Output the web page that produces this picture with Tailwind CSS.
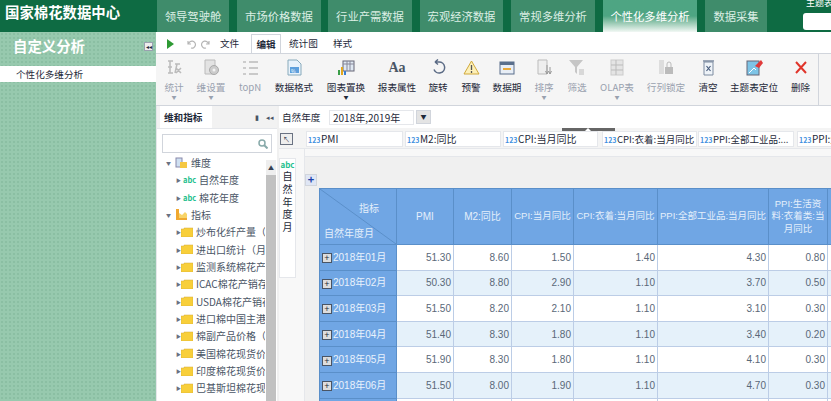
<!doctype html>
<html lang="zh-CN">
<head>
<meta charset="UTF-8" />
<title>国家棉花数据中心</title>
<script src="https://cdn.jsdelivr.net/npm/@tailwindcss/browser@4"></script>
</head>
<body class="bg-white overflow-hidden">
<div class="w-[831px] h-[401px] overflow-hidden flex flex-col font-['Noto_Sans_CJK_SC','Liberation_Sans',sans-serif] text-[10px] text-gray-700">

  <!-- header -->
  <header class="h-[32px] shrink-0 flex bg-[#0e6b43] text-[11.3px] text-[#dcefe5] relative">
    <div class="w-[157px] pl-[5px] pt-[3px] text-[14.4px] leading-[18px] font-bold text-white">国家棉花数据中心</div>
    <div class="w-[72px] mr-[8px] bg-[#3f8c6b] flex items-center justify-center">领导驾驶舱</div>
    <div class="w-[84px] mr-[7px] bg-[#3f8c6b] flex items-center justify-center">市场价格数据</div>
    <div class="w-[84px] mr-[8px] bg-[#3f8c6b] flex items-center justify-center">行业产需数据</div>
    <div class="w-[83px] mr-[8px] bg-[#3f8c6b] flex items-center justify-center">宏观经济数据</div>
    <div class="w-[84px] mr-[8px] bg-[#3f8c6b] flex items-center justify-center">常规多维分析</div>
    <div class="w-[94px] mr-[8px] bg-gradient-to-b from-[#4ea583] from-50% to-[#f2f8f5] flex items-center justify-center text-white">个性化多维分析</div>
    <div class="w-[62px] bg-[#3f8c6b] flex items-center justify-center">数据采集</div>
    <div class="absolute left-[806px] top-[-3px] text-[9px] leading-[12px] text-white whitespace-nowrap">主题表</div>
    <div class="absolute left-[803px] top-[13px] w-[30px] h-[17px] bg-white rounded-[3px]"></div>
  </header>

  <div class="flex-1 flex min-h-0">
    <!-- sidebar -->
    <aside class="w-[156px] shrink-0 bg-[#97c9ae] bg-[radial-gradient(#8bbfa3_1px,transparent_1px)] bg-[size:4px_4px]">
      <div class="h-[34px] pl-[13px] pr-[3px] pb-[6px] flex items-center justify-between">
        <span class="text-[14.4px] font-bold text-white">自定义分析</span>
        <span class="w-[9px] h-[9px] bg-[#eee] border border-gray-400 text-[6px] leading-[7px] text-center text-gray-800">◂◂</span>
      </div>
      <div class="h-[16px] bg-white pl-[16px] text-[9.6px] leading-[16px] text-gray-800">个性化多维分析</div>
    </aside>

    <main class="flex-1 min-w-0 flex flex-col">
      <!-- menu row -->
      <div class="h-[21px] shrink-0 flex items-end pl-[10px] text-[9.6px] text-gray-800">
        <svg class="w-[8px] h-[10px] mb-[4px]" viewBox="0 0 8 10"><path d="M1 0l7 5-7 5z" fill="#2e9a34"/></svg>
        <svg class="w-[10px] h-[10px] ml-[12px] mb-[4px]" viewBox="0 0 10 10"><path d="M2 2v3h3M2.5 5A3.5 3.5 0 1 1 5 9" fill="none" stroke="#b5b5b5" stroke-width="1.2"/></svg>
        <svg class="w-[10px] h-[10px] ml-[5px] mb-[4px]" viewBox="0 0 10 10"><path d="M8 2v3H5M7.500 5A3.500 3.500 0 1 0 5 9" fill="none" stroke="#b5b5b5" stroke-width="1.2"/></svg>
        <span class="ml-[9px] w-[28px] mb-[3px]">文件</span>
        <span class="ml-[3px] w-[30px] h-[19px] border border-b-0 border-gray-300 text-center leading-[18px] font-bold bg-white">编辑</span>
        <span class="ml-[8px] w-[34px] mb-[3px]">统计图</span>
        <span class="ml-[10px] mb-[3px]">样式</span>
      </div>

      <!-- ribbon -->
      <div class="h-[53px] shrink-0 flex bg-[#f5f5f5] border-y border-gray-300 text-[9.6px] text-gray-800 pl-[1px]">
        <div class="w-[34px] flex flex-col items-center pt-[5px] text-gray-400">
          <svg class="w-[16px] h-[17px]" viewBox="0 0 16 17"><path d="M2 2h5M2 8h4M2 14h5M4 2v12M9 5h5M11 5l-2 9M10 9l5 5M15 9l-5 5" fill="none" stroke="#bbb" stroke-width="1.500"/></svg>
          <span class="mt-[5px] leading-[12px]">统计</span><span class="text-[5px] leading-[8px]">▼</span>
        </div>
        <div class="w-[40px] flex flex-col items-center pt-[5px] text-gray-400">
          <svg class="w-[17px] h-[17px]" viewBox="0 0 17 17"><path d="M2 1h10v14H2z" fill="#e3e3e3" stroke="#bbb"/><circle cx="11" cy="11" r="4.500" fill="#ccc" stroke="#aaa"/><circle cx="11" cy="11" r="1.500" fill="#f3f3f3"/></svg>
          <span class="mt-[5px] leading-[12px]">维设置</span><span class="text-[5px] leading-[8px]">▼</span>
        </div>
        <div class="w-[38px] flex flex-col items-center pt-[5px] text-gray-400">
          <svg class="w-[17px] h-[17px]" viewBox="0 0 17 17"><path d="M7 3h9M7 9h9M7 15h9" stroke="#bbb" stroke-width="1.500"/><path d="M1 2h3v2H1zM1 8h3v2H1zM1 14h3v2H1z" fill="#ccc"/></svg>
          <span class="mt-[5px] leading-[12px]">topN</span>
        </div>
        <div class="w-[50px] flex flex-col items-center pt-[5px]">
          <svg class="w-[15px] h-[17px]" viewBox="0 0 15 17"><path d="M1 1h9l4 4v11H1z" fill="#e8f2fb" stroke="#8ab"/><rect x="3" y="8" width="9" height="6" fill="#5d9fdc"/><text x="4" y="13.500" font-size="5" fill="#fff">%</text></svg>
          <span class="mt-[5px] leading-[12px]">数据格式</span>
        </div>
        <div class="w-[54px] flex flex-col items-center pt-[5px]">
          <svg class="w-[18px] h-[17px]" viewBox="0 0 18 17"><rect x="6" y="2" width="11" height="10" fill="#dfe8f2" stroke="#667"/><path d="M6 5h11M10 2v10M13 2v10" stroke="#889"/><rect x="1" y="11" width="2" height="5" fill="#3a9e48"/><rect x="4" y="8" width="2" height="8" fill="#e3a81d"/><rect x="7" y="12" width="2" height="4" fill="#3b7fd1"/></svg>
          <span class="mt-[5px] leading-[12px]">图表置换</span><span class="text-[5px] leading-[8px]">▼</span>
        </div>
        <div class="w-[48px] flex flex-col items-center pt-[5px]">
          <span class="h-[17px] text-[14px] leading-[17px] font-bold text-gray-600 font-['Liberation_Serif',serif]">Aa</span>
          <span class="mt-[5px] leading-[12px]">报表属性</span>
        </div>
        <div class="w-[34px] flex flex-col items-center pt-[5px]">
          <svg class="w-[15px] h-[17px]" viewBox="0 0 15 17"><path d="M4 3h4a5.500 5.500 0 1 1-5 7.500M4 3l3-2.500M4 3l3 2.500" fill="none" stroke="#5b6b85" stroke-width="1.500"/></svg>
          <span class="mt-[5px] leading-[12px]">旋转</span>
        </div>
        <div class="w-[32px] flex flex-col items-center pt-[5px]">
          <svg class="w-[17px] h-[17px]" viewBox="0 0 17 17"><path d="M8.500 2l7.500 13H1z" fill="#fdf0b8" stroke="#d0a93c"/><path d="M8.500 6v5M8.500 12v2" stroke="#555" stroke-width="1.300"/></svg>
          <span class="mt-[5px] leading-[12px]">预警</span>
        </div>
        <div class="w-[40px] flex flex-col items-center pt-[5px]">
          <svg class="w-[16px] h-[17px]" viewBox="0 0 16 17"><rect x="1" y="3" width="14" height="12" fill="#e8eef6" stroke="#5a6f8c"/><rect x="1" y="3" width="14" height="3" fill="#5a6f8c"/><rect x="4" y="9" width="8" height="2" fill="#e9a93a"/></svg>
          <span class="mt-[5px] leading-[12px]">数据期</span>
        </div>
        <div class="w-[34px] flex flex-col items-center pt-[5px] text-gray-400">
          <svg class="w-[15px] h-[17px]" viewBox="0 0 15 17"><path d="M1 1h9v14H1z" fill="#eee" stroke="#bbb"/><path d="M10 6v9M13 8v7M8.500 12l1.500 3 1.500-3M11.500 12l1.500 3 1.500-3" fill="none" stroke="#999"/></svg>
          <span class="mt-[5px] leading-[12px]">排序</span><span class="text-[5px] leading-[8px]">▼</span>
        </div>
        <div class="w-[32px] flex flex-col items-center pt-[5px] text-gray-400">
          <svg class="w-[16px] h-[17px]" viewBox="0 0 16 17"><path d="M0 1h14L8 8v7L6 13V8z" fill="#c6c6c6"/><path d="M10 11h5M10 13h5M10 15h5" stroke="#bbb"/></svg>
          <span class="mt-[5px] leading-[12px]">筛选</span>
        </div>
        <div class="w-[48px] flex flex-col items-center pt-[5px] text-gray-400">
          <svg class="w-[14px] h-[17px]" viewBox="0 0 14 17"><rect x="1" y="1" width="12" height="15" fill="#e4e4e4" stroke="#ccc"/><path d="M1 6h12M1 11h12M6 1v15" stroke="#bbb"/></svg>
          <span class="mt-[5px] leading-[12px]">OLAP表</span><span class="text-[5px] leading-[8px]">▼</span>
        </div>
        <div class="w-[50px] flex flex-col items-center pt-[5px] text-gray-400">
          <svg class="w-[16px] h-[17px]" viewBox="0 0 16 17"><path d="M1 1h5v14H1z" fill="#ddd"/><rect x="7" y="8" width="8" height="7" fill="#bbb"/><path d="M9 8V5a2 2 0 0 1 4 0v3" fill="none" stroke="#bbb"/></svg>
          <span class="mt-[5px] leading-[12px]">行列锁定</span>
        </div>
        <div class="w-[34px] flex flex-col items-center pt-[5px]">
          <svg class="w-[13px] h-[17px]" viewBox="0 0 13 17"><path d="M2 3h9v13H2z" fill="#eef3f8" stroke="#7d8ba0"/><path d="M1 2h11" stroke="#7d8ba0" stroke-width="1.500"/><path d="M4.500 7l4 5M8.500 7l-4 5" stroke="#44597a" stroke-width="1.200"/></svg>
          <span class="mt-[5px] leading-[12px]">清空</span>
        </div>
        <div class="w-[58px] flex flex-col items-center pt-[5px]">
          <svg class="w-[17px] h-[17px]" viewBox="0 0 17 17"><rect x="1" y="2" width="12" height="14" fill="#7ec4e6" stroke="#667"/><path d="M3 14l5-5 2 2" fill="none" stroke="#fff"/><path d="M9 7l6-6 2 3-4 5z" fill="#e03a3a"/></svg>
          <span class="mt-[5px] leading-[12px]">主题表定位</span>
        </div>
        <div class="w-[36px] flex flex-col items-center pt-[5px] border-r border-gray-300">
          <svg class="w-[14px] h-[17px]" viewBox="0 0 14 17"><path d="M2 3l10 11M12 3L2 14" stroke="#e0352b" stroke-width="2"/></svg>
          <span class="mt-[5px] leading-[12px]">删除</span>
        </div>
      </div>

      <div class="flex-1 min-h-0 flex">
        <!-- tree panel -->
        <section class="w-[121px] shrink-0 flex flex-col border-l border-gray-200 bg-[#f2f2f2]">
          <div class="h-[22px] shrink-0 flex items-center text-[9.6px]">
            <span class="w-[52px] ml-[3px] h-full bg-white flex items-center pl-[4px] font-bold text-gray-800">维和指标</span>
            <span class="ml-auto mr-[7px] text-[7px] text-gray-600">▮</span>
            <span class="mr-[3px] text-[7px] text-gray-600">◂◂</span>
          </div>
          <div class="flex-1 min-h-0 bg-white relative pt-[5px] border-t border-gray-200">
            <div class="mx-[5px] h-[19px] border border-gray-300 flex items-center justify-end pr-[3px]">
              <svg class="w-[10px] h-[10px]" viewBox="0 0 10 10"><circle cx="4" cy="4" r="3" fill="none" stroke="#8aa" stroke-width="1.500"/><path d="M6 6l3.500 3.500" stroke="#8aa" stroke-width="2"/></svg>
            </div>
            <div class="absolute right-[1px] top-[31px] bottom-0 w-[10px] bg-[#eee]">
              <div class="h-[15px] text-[6px] text-center leading-[15px] text-gray-700">▲</div>
              <div class="h-full bg-[#c1c1c1]"></div>
            </div>
            <div class="w-[108px] overflow-hidden whitespace-nowrap text-[10px] leading-[17.35px] text-gray-600 mt-[1px]">
              <div class="flex items-center pl-[9px]"><span class="w-[8px] text-[5px] text-gray-500">▼</span><svg class="w-[12px] h-[11px] ml-[1px] mr-[4px]" viewBox="0 0 12 11"><rect x="1" y="1" width="6" height="9" fill="#cfe0f2" stroke="#88a"/><rect x="5" y="5" width="7" height="6" fill="#f5c842"/></svg>维度</div>
              <div class="flex items-center pl-[19px]"><span class="w-[7px] text-[5px] text-gray-500">▶</span><span class="w-[13px] mr-[3px] text-[7.5px] font-bold text-[#1fbf8f]">abc</span>自然年度</div>
              <div class="flex items-center pl-[19px]"><span class="w-[7px] text-[5px] text-gray-500">▶</span><span class="w-[13px] mr-[3px] text-[7.5px] font-bold text-[#1fbf8f]">abc</span>棉花年度</div>
              <div class="flex items-center pl-[9px]"><span class="w-[8px] text-[5px] text-gray-500">▼</span><svg class="w-[12px] h-[11px] ml-[1px] mr-[4px]" viewBox="0 0 12 11"><path d="M1 0h3v9h8v2H1z" fill="#f0a830"/><path d="M4 4l3 2 3-3 2 2v4H4z" fill="#f8d468"/></svg>指标</div>
              <div class="flex items-center pl-[19px]"><span class="w-[8px] text-[5px] text-gray-500">▶</span><svg class="w-[12px] h-[10px] mr-[3px] shrink-0" viewBox="0 0 12 10"><path d="M0 2h3V1h9v9H0z" fill="#f8cf3a" stroke="#d4a93a" stroke-width=".5"/></svg>炒布化纤产量（月）</div>
              <div class="flex items-center pl-[19px]"><span class="w-[8px] text-[5px] text-gray-500">▶</span><svg class="w-[12px] h-[10px] mr-[3px] shrink-0" viewBox="0 0 12 10"><path d="M0 2h3V1h9v9H0z" fill="#f8cf3a" stroke="#d4a93a" stroke-width=".5"/></svg>进出口统计（月）</div>
              <div class="flex items-center pl-[19px]"><span class="w-[8px] text-[5px] text-gray-500">▶</span><svg class="w-[12px] h-[10px] mr-[3px] shrink-0" viewBox="0 0 12 10"><path d="M0 2h3V1h9v9H0z" fill="#f8cf3a" stroke="#d4a93a" stroke-width=".5"/></svg>监测系统棉花产销</div>
              <div class="flex items-center pl-[19px]"><span class="w-[8px] text-[5px] text-gray-500">▶</span><svg class="w-[12px] h-[10px] mr-[3px] shrink-0" viewBox="0 0 12 10"><path d="M0 2h3V1h9v9H0z" fill="#f8cf3a" stroke="#d4a93a" stroke-width=".5"/></svg>ICAC棉花产销存</div>
              <div class="flex items-center pl-[19px]"><span class="w-[8px] text-[5px] text-gray-500">▶</span><svg class="w-[12px] h-[10px] mr-[3px] shrink-0" viewBox="0 0 12 10"><path d="M0 2h3V1h9v9H0z" fill="#f8cf3a" stroke="#d4a93a" stroke-width=".5"/></svg>USDA棉花产销存</div>
              <div class="flex items-center pl-[19px]"><span class="w-[8px] text-[5px] text-gray-500">▶</span><svg class="w-[12px] h-[10px] mr-[3px] shrink-0" viewBox="0 0 12 10"><path d="M0 2h3V1h9v9H0z" fill="#f8cf3a" stroke="#d4a93a" stroke-width=".5"/></svg>进口棉中国主港</div>
              <div class="flex items-center pl-[19px]"><span class="w-[8px] text-[5px] text-gray-500">▶</span><svg class="w-[12px] h-[10px] mr-[3px] shrink-0" viewBox="0 0 12 10"><path d="M0 2h3V1h9v9H0z" fill="#f8cf3a" stroke="#d4a93a" stroke-width=".5"/></svg>棉副产品价格（月）</div>
              <div class="flex items-center pl-[19px]"><span class="w-[8px] text-[5px] text-gray-500">▶</span><svg class="w-[12px] h-[10px] mr-[3px] shrink-0" viewBox="0 0 12 10"><path d="M0 2h3V1h9v9H0z" fill="#f8cf3a" stroke="#d4a93a" stroke-width=".5"/></svg>美国棉花现货价</div>
              <div class="flex items-center pl-[19px]"><span class="w-[8px] text-[5px] text-gray-500">▶</span><svg class="w-[12px] h-[10px] mr-[3px] shrink-0" viewBox="0 0 12 10"><path d="M0 2h3V1h9v9H0z" fill="#f8cf3a" stroke="#d4a93a" stroke-width=".5"/></svg>印度棉花现货价</div>
              <div class="flex items-center pl-[19px]"><span class="w-[8px] text-[5px] text-gray-500">▶</span><svg class="w-[12px] h-[10px] mr-[3px] shrink-0" viewBox="0 0 12 10"><path d="M0 2h3V1h9v9H0z" fill="#f8cf3a" stroke="#d4a93a" stroke-width=".5"/></svg>巴基斯坦棉花现货</div>
            </div>
          </div>
        </section>

        <!-- pivot area -->
        <section class="flex-1 min-w-0 flex flex-col bg-[#f4f4f4] border-l-[2px] border-[#f0f0f0] relative">
          <div class="h-[22px] shrink-0 bg-white flex items-center pl-[3px] text-[9.6px] text-gray-800">
            <span class="w-[47px]">自然年度</span>
            <span class="w-[85px] h-[15px] border border-gray-200 pl-[3px] leading-[13px] text-[10px]">2018年,2019年</span>
            <span class="ml-[2px] w-[15px] h-[14px] bg-[#e4e4e4] border border-gray-300 text-center text-[6px] leading-[12px]">▼</span>
          </div>
          <div class="absolute left-[283px] top-[22px] w-[53px] h-[3px] bg-[#666]"></div>
          <svg class="absolute left-[306px] top-[22px] w-[6px] h-[3px]" viewBox="0 0 6 3"><path d="M0 3l3-3 3 3z" fill="#fff"/></svg>

          <div class="h-[19px] shrink-0 flex items-center mt-[2px] pl-[1px] overflow-hidden border-b border-gray-200 text-[10px] text-gray-800 whitespace-nowrap">
            <span class="w-[13px] h-[12px] mr-[13px] bg-[#eee] border border-gray-500 shrink-0 text-[7px] leading-[10px] text-center">↖</span>
            <span class="w-[97px] h-[16px] mr-[2px] shrink-0 bg-white border border-gray-200 pl-[1px] leading-[14px]"><b class="inline-block w-[12px] mr-[1px] text-[7px] text-[#3f8fe0]">123</b>PMI</span>
            <span class="w-[96px] h-[16px] mr-[2px] shrink-0 bg-white border border-gray-200 pl-[1px] leading-[14px]"><b class="inline-block w-[12px] mr-[1px] text-[7px] text-[#3f8fe0]">123</b>M2:同比</span>
            <span class="w-[95px] h-[16px] mr-[4px] shrink-0 bg-white border border-gray-200 pl-[1px] leading-[14px]"><b class="inline-block w-[12px] mr-[1px] text-[7px] text-[#3f8fe0]">123</b>CPI:当月同比</span>
            <span class="w-[95px] h-[16px] mr-[1px] shrink-0 bg-white border border-gray-200 pl-[1px] leading-[14px] overflow-hidden"><b class="inline-block w-[12px] mr-[1px] text-[7px] text-[#3f8fe0]">123</b><span class="text-[9.5px]">CPI:衣着:当月同比</span></span>
            <span class="w-[96px] h-[16px] mr-[3px] shrink-0 bg-white border border-gray-200 pl-[1px] leading-[14px] overflow-hidden"><b class="inline-block w-[12px] mr-[1px] text-[7px] text-[#3f8fe0]">123</b><span class="text-[9.5px]">PPI:全部工业品:...</span></span>
            <span class="w-[96px] h-[16px] shrink-0 bg-white border border-gray-200 pl-[1px] leading-[14px]"><b class="inline-block w-[12px] mr-[1px] text-[7px] text-[#3f8fe0]">123</b>PPI:生活资料</span>
          </div>

          <div class="flex-1 min-h-0 flex">
            <div class="w-[26px] shrink-0 bg-[#f8f8f8] border-r border-gray-200 pt-[9px]">
              <div class="w-[17px] h-[120px] bg-white border border-gray-200 flex flex-col items-center text-[10px] leading-[12.75px] text-gray-800">
                <b class="text-[8px] leading-[11px] text-[#1fbf8f]">abc</b>
                <span>自</span><span>然</span><span>年</span><span>度</span><span>月</span>
              </div>
            </div>
            <div class="flex-1 min-w-0 bg-[#f0f0f0] overflow-hidden">
              <div class="h-[8px] bg-[#f8f8f8] border-b border-gray-200"></div>
              <span class="block mt-[17px] w-[12px] h-[12px] bg-[#dfe6f5] border border-gray-300 text-[#1c3fa8] text-[11px] leading-[9px] text-center font-bold">+</span>
              <table class="ml-[14px] mt-[2px] table-fixed border-collapse w-[520px] text-right text-[10px] text-[#5a6878] font-['Liberation_Sans','Noto_Sans_CJK_SC',sans-serif]">
                <colgroup>
                  <col class="w-[77px]" /><col class="w-[57px]" /><col class="w-[58px]" /><col class="w-[62px]" /><col class="w-[84px]" /><col class="w-[111px]" /><col class="w-[59px]" /><col class="w-[12px]" />
                </colgroup>
                <thead class="bg-[#70a6e4] text-[#e4effb] text-center text-[10px]">
                  <tr class="h-[56px]">
                    <th class="font-normal border border-[#5a8fc9] p-0 pt-[9px] relative text-left leading-[13px]">
                      <svg class="absolute inset-0 w-full h-full" viewBox="0 0 77 56" preserveAspectRatio="none"><path d="M0 0L77 56" stroke="#5a8fc9"/></svg>
                      <div class="pl-[39px] mb-[12px]">指标</div>
                      <div class="pl-[4px]">自然年度月</div>
                    </th>
                    <th class="font-normal border border-[#5a8fc9]">PMI</th>
                    <th class="font-normal border border-[#5a8fc9]">M2:同比</th>
                    <th class="font-normal border border-[#5a8fc9] whitespace-nowrap text-[9.5px]">CPI:当月同比</th>
                    <th class="font-normal border border-[#5a8fc9] whitespace-nowrap text-[9.5px]">CPI:衣着:当月同比</th>
                    <th class="font-normal border border-[#5a8fc9] whitespace-nowrap text-[9.5px]">PPI:全部工业品:当月同比</th>
                    <th class="font-normal border border-[#5a8fc9] leading-[12.500px] text-[9.5px]">PPI:生活资料:衣着类:当月同比</th>
                    <th class="font-normal border border-[#5a8fc9]"></th>
                  </tr>
                </thead>
                <tbody>
                  <tr class="h-[25.6px] bg-white">
                    <th class="font-normal text-left bg-[#70a6e4] text-[#eaf2fc] border border-[#5a8fc9] pl-[2px] whitespace-nowrap"><span class="inline-block w-[10px] h-[10px] bg-[#ddd] border border-gray-600 text-gray-800 text-[9px] leading-[8px] text-center mr-[1px] align-middle">+</span>2018年01月</th>
                    <td class="border border-[#bccde6] pr-[2px]">51.30</td><td class="border border-[#bccde6] pr-[2px]">8.60</td><td class="border border-[#bccde6] pr-[2px]">1.50</td><td class="border border-[#bccde6] pr-[2px]">1.40</td><td class="border border-[#bccde6] pr-[2px]">4.30</td><td class="border border-[#bccde6] pr-[2px]">0.80</td><td class="border border-[#bccde6]"></td>
                  </tr>
                  <tr class="h-[25.6px] bg-[#e5f1fa]">
                    <th class="font-normal text-left bg-[#70a6e4] text-[#eaf2fc] border border-[#5a8fc9] pl-[2px] whitespace-nowrap"><span class="inline-block w-[10px] h-[10px] bg-[#ddd] border border-gray-600 text-gray-800 text-[9px] leading-[8px] text-center mr-[1px] align-middle">+</span>2018年02月</th>
                    <td class="border border-[#bccde6] pr-[2px]">50.30</td><td class="border border-[#bccde6] pr-[2px]">8.80</td><td class="border border-[#bccde6] pr-[2px]">2.90</td><td class="border border-[#bccde6] pr-[2px]">1.10</td><td class="border border-[#bccde6] pr-[2px]">3.70</td><td class="border border-[#bccde6] pr-[2px]">0.50</td><td class="border border-[#bccde6]"></td>
                  </tr>
                  <tr class="h-[25.6px] bg-white">
                    <th class="font-normal text-left bg-[#70a6e4] text-[#eaf2fc] border border-[#5a8fc9] pl-[2px] whitespace-nowrap"><span class="inline-block w-[10px] h-[10px] bg-[#ddd] border border-gray-600 text-gray-800 text-[9px] leading-[8px] text-center mr-[1px] align-middle">+</span>2018年03月</th>
                    <td class="border border-[#bccde6] pr-[2px]">51.50</td><td class="border border-[#bccde6] pr-[2px]">8.20</td><td class="border border-[#bccde6] pr-[2px]">2.10</td><td class="border border-[#bccde6] pr-[2px]">1.10</td><td class="border border-[#bccde6] pr-[2px]">3.10</td><td class="border border-[#bccde6] pr-[2px]">0.30</td><td class="border border-[#bccde6]"></td>
                  </tr>
                  <tr class="h-[25.6px] bg-[#e5f1fa]">
                    <th class="font-normal text-left bg-[#70a6e4] text-[#eaf2fc] border border-[#5a8fc9] pl-[2px] whitespace-nowrap"><span class="inline-block w-[10px] h-[10px] bg-[#ddd] border border-gray-600 text-gray-800 text-[9px] leading-[8px] text-center mr-[1px] align-middle">+</span>2018年04月</th>
                    <td class="border border-[#bccde6] pr-[2px]">51.40</td><td class="border border-[#bccde6] pr-[2px]">8.30</td><td class="border border-[#bccde6] pr-[2px]">1.80</td><td class="border border-[#bccde6] pr-[2px]">1.10</td><td class="border border-[#bccde6] pr-[2px]">3.40</td><td class="border border-[#bccde6] pr-[2px]">0.20</td><td class="border border-[#bccde6]"></td>
                  </tr>
                  <tr class="h-[25.6px] bg-white">
                    <th class="font-normal text-left bg-[#70a6e4] text-[#eaf2fc] border border-[#5a8fc9] pl-[2px] whitespace-nowrap"><span class="inline-block w-[10px] h-[10px] bg-[#ddd] border border-gray-600 text-gray-800 text-[9px] leading-[8px] text-center mr-[1px] align-middle">+</span>2018年05月</th>
                    <td class="border border-[#bccde6] pr-[2px]">51.90</td><td class="border border-[#bccde6] pr-[2px]">8.30</td><td class="border border-[#bccde6] pr-[2px]">1.80</td><td class="border border-[#bccde6] pr-[2px]">1.10</td><td class="border border-[#bccde6] pr-[2px]">4.10</td><td class="border border-[#bccde6] pr-[2px]">0.30</td><td class="border border-[#bccde6]"></td>
                  </tr>
                  <tr class="h-[25.6px] bg-[#e5f1fa]">
                    <th class="font-normal text-left bg-[#70a6e4] text-[#eaf2fc] border border-[#5a8fc9] pl-[2px] whitespace-nowrap"><span class="inline-block w-[10px] h-[10px] bg-[#ddd] border border-gray-600 text-gray-800 text-[9px] leading-[8px] text-center mr-[1px] align-middle">+</span>2018年06月</th>
                    <td class="border border-[#bccde6] pr-[2px]">51.50</td><td class="border border-[#bccde6] pr-[2px]">8.00</td><td class="border border-[#bccde6] pr-[2px]">1.90</td><td class="border border-[#bccde6] pr-[2px]">1.10</td><td class="border border-[#bccde6] pr-[2px]">4.70</td><td class="border border-[#bccde6] pr-[2px]">0.30</td><td class="border border-[#bccde6]"></td>
                  </tr>
                  <tr class="h-[25.6px] bg-white">
                    <th class="bg-[#70a6e4] border border-[#5a8fc9]"></th>
                    <td class="border border-[#bccde6]"></td><td class="border border-[#bccde6]"></td><td class="border border-[#bccde6]"></td><td class="border border-[#bccde6]"></td><td class="border border-[#bccde6]"></td><td class="border border-[#bccde6]"></td><td class="border border-[#bccde6]"></td>
                  </tr>
                </tbody>
              </table>
            </div>
          </div>
        </section>
      </div>
    </main>
  </div>
</div>
</body>
</html>
